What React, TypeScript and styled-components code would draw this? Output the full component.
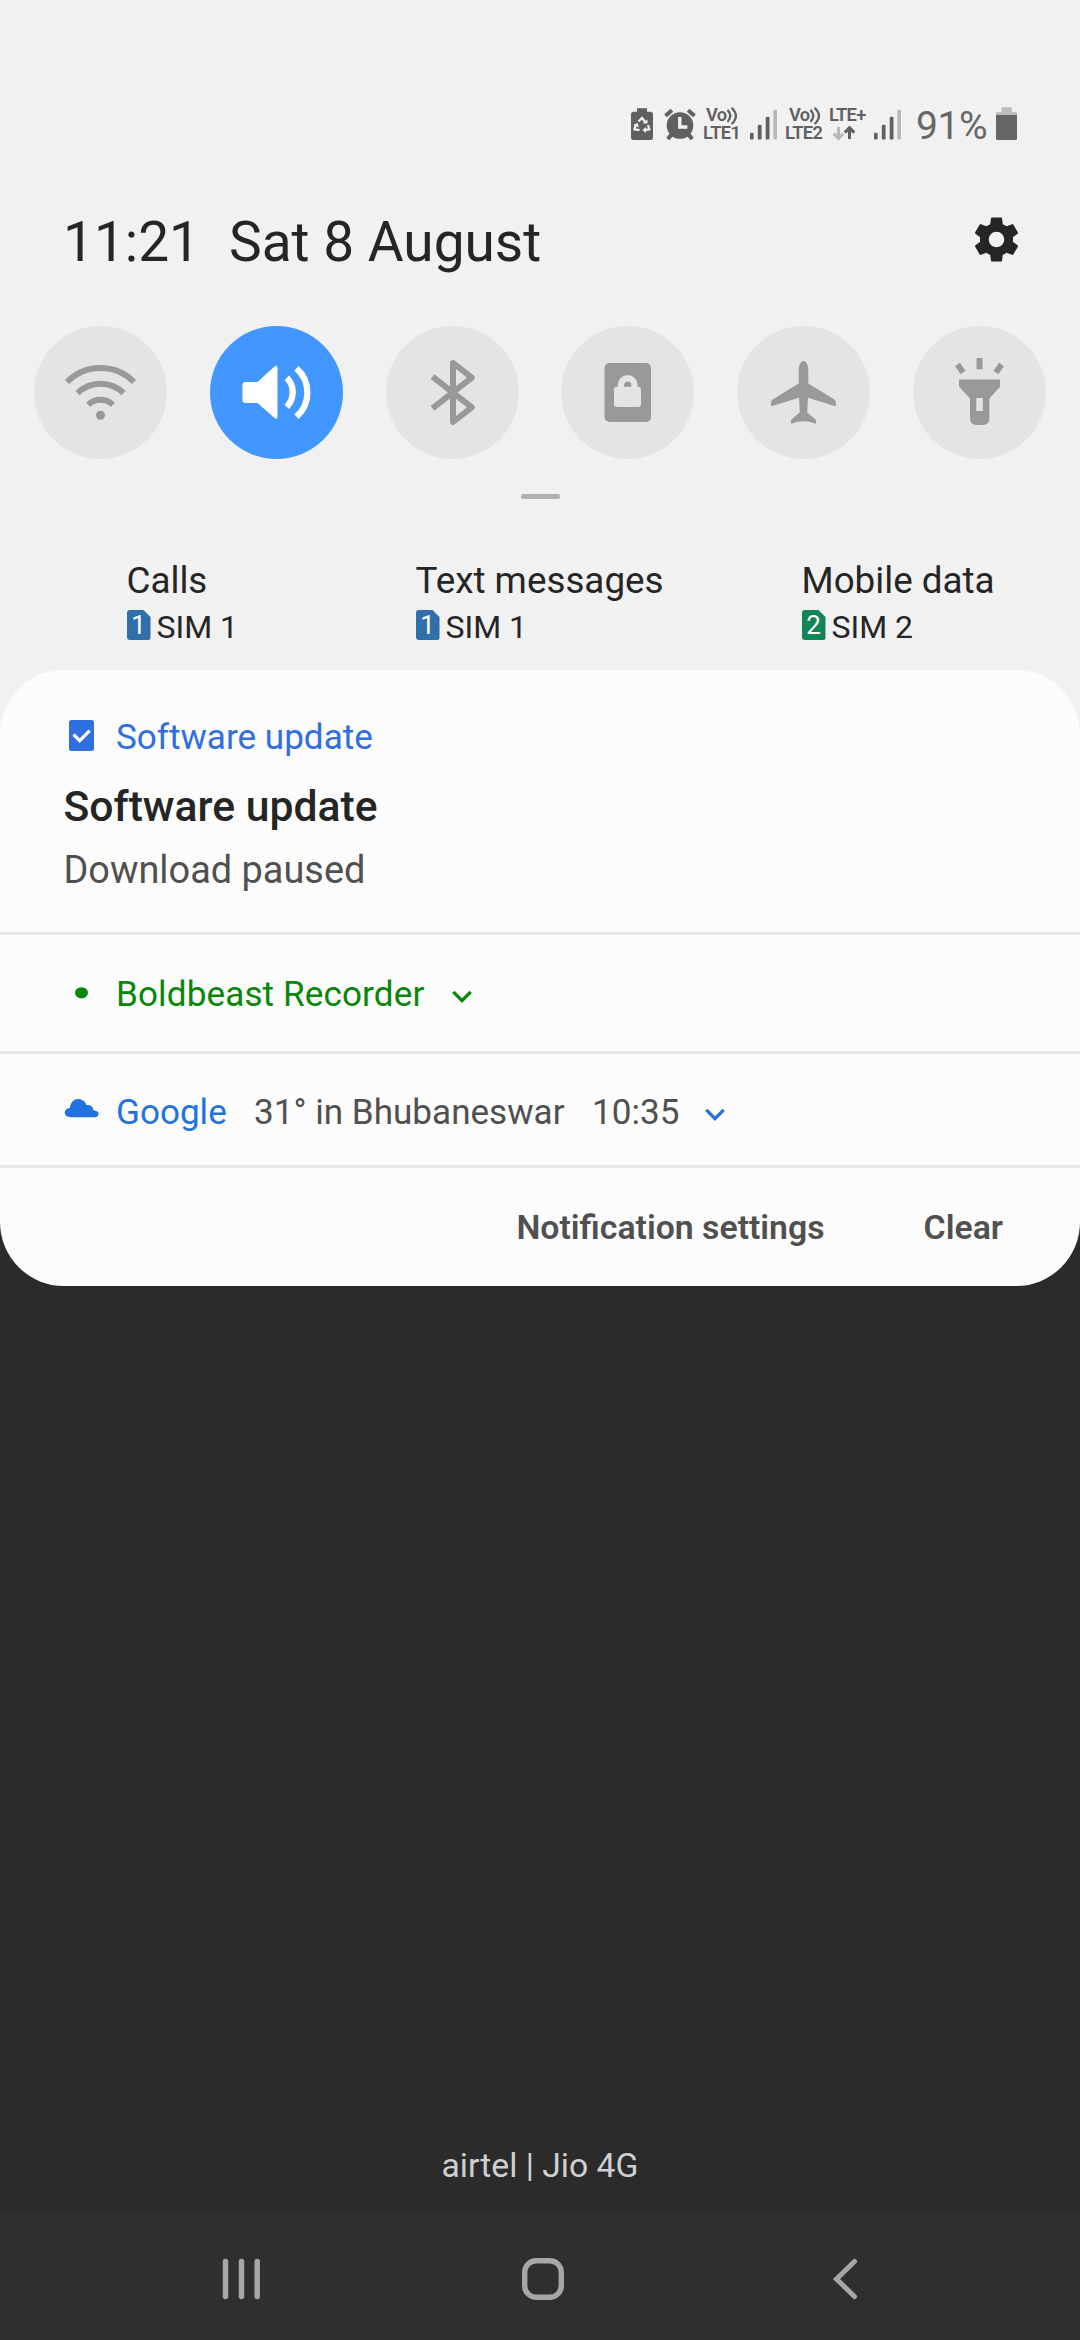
import React from "react";
import styled, { createGlobalStyle } from "styled-components";

const GlobalStyle = createGlobalStyle`
  *, *::before, *::after { box-sizing: border-box; }
  body { margin: 0; background: #2b2b2b; font-family: Roboto, "Noto Sans", sans-serif; }
  svg { display: block; flex: none; }
`;

const Screen = styled.main`
  display: flex;
  flex-direction: column;
  width: 1080px;
  height: 2340px;
  overflow: hidden;
  background: #2b2b2b;
`;

const Shade = styled.div`
  background: linear-gradient(#f1f1f1 0 900px, #2b2b2b 900px);
  height: 1286px;
  display: flex;
  flex-direction: column;
`;

/* ---------- status bar ---------- */

const StatusBar = styled.header`
  display: flex;
  height: 184px;
  padding: 106px 63px 0 0;
  justify-content: flex-end;
  color: #606060;
`;

const StatusItem = styled.div<{ $width: number; $gap?: number }>`
  flex: none;
  width: ${(p) => p.$width}px;
  margin-left: ${(p) => p.$gap ?? 0}px;
`;

const TinyLine = styled.div<{ $indent?: number; $tracking?: number }>`
  display: flex;
  height: 18px;
  padding-left: ${(p) => p.$indent ?? 0}px;
  font-size: 18.3px;
  font-weight: 600;
  line-height: 18px;
  letter-spacing: ${(p) => p.$tracking ?? -0.6}px;
  white-space: nowrap;
`;

const Percent = styled.div`
  font-size: 39px;
  line-height: 40px;
  letter-spacing: -0.4px;
  color: #666;
  white-space: nowrap;
`;

/* ---------- clock ---------- */

const ClockRow = styled.div`
  display: flex;
  align-items: center;
  height: 116px;
  padding: 0 57px 0 63px;
  font-size: 55px;
  line-height: 64px;
  color: #252525;
  white-space: nowrap;
`;

const Time = styled.time`
  width: 166px;
`;

const DateText = styled.span`
  flex: 1;
`;

const SettingsButton = styled.button`
  margin: 0 0 5px;
  padding: 0;
  border: 0;
  background: none;
`;

/* ---------- quick toggles ---------- */

const Toggles = styled.div`
  display: flex;
  justify-content: space-between;
  padding: 26px 34px 0;
`;

const Toggle = styled.button<{ $on?: boolean }>`
  width: 133px;
  height: 133px;
  padding: 0;
  border: 0;
  border-radius: 50%;
  background: ${(p) => (p.$on ? "#4296ff" : "#e4e4e4")};
  color: ${(p) => (p.$on ? "#fff" : "#999")};
`;

const Handle = styled.div`
  width: 39px;
  height: 5px;
  margin: 35px auto 0;
  border-radius: 3px;
  background: #b1b1b1;
`;

/* ---------- SIM selection ---------- */

const SimRow = styled.section`
  display: grid;
  grid-template-columns: 289px 386px 1fr;
  height: 171px;
  padding: 60px 0 0 126.5px;
  color: #252525;
`;

const SimTitle = styled.div`
  font-size: 36.8px;
  line-height: 44px;
  white-space: nowrap;
`;

const SimValue = styled.div`
  display: flex;
  align-items: center;
  gap: 6px;
  height: 40px;
  margin-top: 4px;
  font-size: 32px;
  line-height: 40px;
  white-space: nowrap;
`;

const SimBadge = styled.span<{ $color: string }>`
  width: 24px;
  height: 30px;
  margin-bottom: 4px;
  border-radius: 3px;
  background: ${(p) => p.$color};
  clip-path: polygon(0 0, 17px 0, 100% 7px, 100% 100%, 0 100%);
  color: #fff;
  font-size: 26px;
  line-height: 31px;
  text-align: center;
`;

/* ---------- notifications ---------- */

const Panel = styled.section`
  display: flex;
  flex-direction: column;
  height: 616px;
  border-radius: 64px;
  background: #fcfcfc;
`;

const Card = styled.article`
  height: 265px;
  padding: 45px 63px 0;
  border-bottom: 3px solid #e8e8e8;
`;

const AppLine = styled.div<{ $color: string }>`
  display: flex;
  align-items: center;
  height: 44px;
  color: ${(p) => p.$color};
  font-size: 35.1px;
  line-height: 44px;
  white-space: nowrap;
`;

const IconSlot = styled.span`
  flex: none;
  width: 53px;
`;

const AppName = styled.span<{ $width?: number; $tracking?: number }>`
  flex: none;
  width: ${(p) => (p.$width ? `${p.$width}px` : "auto")};
  letter-spacing: ${(p) => p.$tracking ?? 0}px;
`;

const Detail = styled.span<{ $width: number }>`
  flex: none;
  width: ${(p) => p.$width}px;
  color: #505050;
`;

const CardTitle = styled.h2`
  margin: 22px 0 0 0.5px;
  font-size: 42.7px;
  font-weight: 500;
  line-height: 50px;
  color: #252525;
`;

const CardBody = styled.p`
  margin: 17px 0 0 0.5px;
  font-size: 37.9px;
  line-height: 44px;
  color: #505050;
`;

const CompactRow = styled.article<{ $height: number; $top: number }>`
  height: ${(p) => p.$height}px;
  padding: ${(p) => p.$top}px 63px 0;
  border-bottom: 3px solid #e8e8e8;
`;

const Actions = styled.footer`
  display: flex;
  flex: 1;
  justify-content: flex-end;
  gap: 99px;
  padding: 38px 77px 0 0;
`;

const TextButton = styled.button`
  height: 44px;
  padding: 0;
  border: 0;
  background: none;
  color: #505050;
  font: 600 33.8px/44px Roboto, "Noto Sans", sans-serif;
  white-space: nowrap;
`;

/* ---------- bottom ---------- */

const Carrier = styled.div`
  display: flex;
  flex: 1;
  align-items: flex-end;
  justify-content: center;
  padding-bottom: 26px;
  color: #d0d0d0;
  font-size: 33.7px;
  line-height: 44px;
`;

const NavBar = styled.nav`
  display: grid;
  grid-template-columns: 42px 42px 42px;
  justify-content: center;
  align-items: center;
  column-gap: 260px;
  height: 126px;
  padding: 4px 0 0 6px;
  background: #2f2f2f;
  color: #a6a6a6;
`;

/* ---------- icons ---------- */

const BatterySaverIcon = () => (
  <svg width="22" height="34" viewBox="0 0 22 34">
    <path fill="currentColor" d="M6 2.3h10v3.5h3.5A2.5 2.5 0 0 1 22 8.300v23.200a2.500 2.500 0 0 1-2.500 2.500h-17A2.500 2.500 0 0 1 0 31.500V8.300A2.500 2.500 0 0 1 2.500 5.800H6z" />
    <g fill="none" stroke="#f1f1f1" strokeWidth="2.300">
      <path d="M7.600 15.500 10.900 12l3.400 4" />
      <path d="M17 19l1.300 4.300-5 .8" />
      <path d="M4.800 18.500l-1.300 4.800 5 .8" />
    </g>
    <path fill="#f1f1f1" d="M11.500 17.500h5v-4zM15 21v6l-3.500-3zM2.500 19l4-2 1.500 4.500z" />
  </svg>
);

const AlarmIcon = () => (
  <svg width="32" height="34" viewBox="0 0 32 34">
    <circle cx="16" cy="19.500" r="13.300" fill="currentColor" />
    <path
      d="M1.500 9.800 8 4.200M30.500 9.800 24 4.200M7.500 28.500 3.800 33M24.500 28.500 28.200 33"
      stroke="currentColor"
      strokeWidth="4"
      fill="none"
    />
    <path d="M15.800 11v10h7.500" fill="none" stroke="#f1f1f1" strokeWidth="3.400" />
  </svg>
);

const VoiceWaves = () => (
  <svg width="12" height="19" viewBox="0 0 12 19">
    <g fill="none" stroke="currentColor" strokeWidth="2.300">
      <path d="M.4 3.900Q6.200 9.800.4 15.900" />
      <path d="M4.600 1.900Q13.200 9.800 4.600 18" />
    </g>
  </svg>
);

const SignalIcon = () => (
  <svg width="27" height="34" viewBox="0 0 27 34">
    <g fill="currentColor">
      <rect x="0" y="26.700" width="3.600" height="6.800" rx="1.200" />
      <rect x="7.800" y="18.700" width="3.800" height="14.800" rx="1.200" />
      <rect x="15.700" y="10.700" width="3.800" height="22.800" rx="1.200" />
      <rect x="23.400" y="3.700" width="3.600" height="29.800" rx="1.200" fill="#b8b8b8" />
    </g>
  </svg>
);

const DataArrows = () => (
  <svg width="23" height="17" viewBox="0 0 23 17">
    <path d="M5.500 3v11M.8 9.600l4.700 5 4.700-5" fill="none" stroke="#b8b8b8" strokeWidth="3" />
    <path d="M16.500 15V4M11.800 8.600l4.700-5 4.700 5" fill="none" stroke="currentColor" strokeWidth="3" />
  </svg>
);

const BatteryIcon = () => (
  <svg width="21" height="34" viewBox="0 0 21 34">
    <path fill="#bdbdbd" d="M5.500 1.300h10.300V6H19.500A1.500 1.500 0 0 1 21 7.500V10H0V7.500A1.500 1.500 0 0 1 1.500 6h4z" />
    <path fill="#666" d="M0 9h21v23.500a1.500 1.500 0 0 1-1.500 1.500h-18A1.500 1.500 0 0 1 0 32.500z" />
  </svg>
);

const GearIcon = () => (
  <svg width="53" height="53" viewBox="0 0 24 24" fill="#252525">
    <path d="M19.430 12.980c.040-.320.070-.640.070-.980s-.030-.660-.070-.980l2.110-1.650c.190-.150.240-.420.120-.640l-2-3.460c-.120-.220-.390-.300-.610-.220l-2.490 1c-.520-.400-1.080-.730-1.690-.980l-.380-2.650C14.460 2.180 14.250 2 14 2h-4c-.250 0-.460.180-.490.420l-.380 2.650c-.610.250-1.170.590-1.690.980l-2.490-1c-.230-.090-.490 0-.610.220l-2 3.460c-.130.220-.070.490.120.640l2.110 1.650c-.040.320-.070.650-.070.980s.030.660.070.980l-2.110 1.650c-.190.150-.240.420-.120.640l2 3.460c.120.220.390.300.610.220l2.490-1c.520.400 1.080.730 1.690.980l.380 2.650c.030.240.240.420.490.420h4c.250 0 .460-.180.490-.420l.380-2.650c.610-.250 1.170-.590 1.690-.980l2.490 1c.230.090.490 0 .610-.220l2-3.460c.120-.220.070-.490-.120-.640l-2.110-1.650zM12 15.500c-1.930 0-3.500-1.570-3.500-3.500s1.570-3.500 3.500-3.500 3.500 1.570 3.500 3.500-1.570 3.500-3.500 3.500z" />
  </svg>
);

const ToggleSvg = ({ children }: { children: React.ReactNode }) => (
  <svg width="133" height="133" viewBox="0 0 133 133">{children}</svg>
);

const WifiIcon = () => (
  <ToggleSvg>
    <g fill="none" stroke="currentColor" strokeWidth="6">
      <path d="M33 56a47 47 0 0 1 67 0" />
      <path d="M43.500 67.200a32.800 32.800 0 0 1 46 0" />
      <path d="M54.200 78.800a17.600 17.600 0 0 1 24.600 0" />
    </g>
    <circle cx="66.500" cy="89.300" r="4.500" fill="currentColor" />
  </ToggleSvg>
);

const SoundIcon = () => (
  <ToggleSvg>
    <path fill="currentColor" d="M35.400 56H47.500L64.500 40.600Q67.500 38.600 67.500 42V90.700Q67.500 94 64.500 92L47.500 77H35.400a3 3 0 0 1-3-3V59a3 3 0 0 1 3-3z" />
    <g fill="none" stroke="currentColor" strokeWidth="6.300">
      <path d="M76.800 51.800a20.900 20.900 0 0 1 0 29.100" />
      <path d="M86.500 42.300a32.300 32.300 0 0 1 0 48.400" />
    </g>
  </ToggleSvg>
);

const BluetoothIcon = () => (
  <ToggleSvg>
    <path
      fill="none"
      stroke="currentColor"
      strokeWidth="6"
      strokeLinejoin="round"
      d="M46.500 50.700 85.800 81.400 67 96V37L85.800 51.600 46.500 82.300"
    />
  </ToggleSvg>
);

const LockIcon = () => (
  <ToggleSvg>
    <rect x="43.500" y="37" width="46.500" height="59" rx="5" fill="currentColor" />
    <rect x="53" y="60.700" width="27" height="20.300" rx="3" fill="#e4e4e4" />
    <path d="M59.900 62v-3a6.750 6.750 0 0 1 13.500 0v3" fill="none" stroke="#e4e4e4" strokeWidth="6.300" />
  </ToggleSvg>
);

const PlaneIcon = () => (
  <ToggleSvg>
    <path
      fill="currentColor"
      d="M66.500 35C69.500 35 71.300 40 71.300 44.500V57.500L97 73.200Q99 74.600 99 77V79.800L97.500 80 72 72H71L70.200 86.500 77.500 92.500Q79.400 94 79.200 96.500L78.500 97.700Q66.500 93 54.500 97.700L53.800 96.500Q53.600 94 55.500 92.500L62.800 86.500 62 72H61L35.500 80 34 79.800V77Q34 74.600 36 73.200L61.700 57.500V44.500C61.700 40 63.500 35 66.500 35z"
    />
  </ToggleSvg>
);

const TorchIcon = () => (
  <ToggleSvg>
    <path fill="currentColor" d="M46 53.500H87V60.700L76.400 72.500V93a6 6 0 0 1-6 6H63a6 6 0 0 1-6-6V72.500L46 60.700z" />
    <rect x="63.300" y="72" width="6.500" height="13" fill="#e4e4e4" />
    <path d="M66.500 32v11.300M44.500 38.500l5.600 7.900M88.500 38.500l-5.600 7.900" stroke="currentColor" strokeWidth="6" />
  </ToggleSvg>
);

const UpdateIcon = () => (
  <svg width="37" height="44" viewBox="0 0 37 44">
    <rect x="6" y="5" width="25" height="31" rx="2.500" fill="currentColor" />
    <path d="M10.500 19.500l6.200 6.200 10-10" fill="none" stroke="#fff" strokeWidth="3.200" />
  </svg>
);

const DotIcon = () => (
  <svg width="37" height="44" viewBox="0 0 37 44">
    <ellipse cx="18.500" cy="20.800" rx="6.500" ry="5.600" fill="currentColor" />
  </svg>
);

const CloudIcon = () => (
  <svg width="37" height="44" viewBox="0 0 37 44">
    <path fill="currentColor" d="M8 27.200C4 27.200 1.700 25.200 1.700 22.500c0-2.700 2-4.300 5-4.600C7.800 12 11 9 15.200 9c4 0 7 2.400 8.200 6 3.800-.6 6.800 1.700 7.100 5.300 3.200.2 5.100 1.700 5.100 3.700 0 2-1.600 3.200-4 3.200z" />
  </svg>
);

const Chevron = () => (
  <svg width="20" height="44" viewBox="0 0 20 44">
    <path d="M1.300 19.900l8.700 8.700 8.700-8.700" fill="none" stroke="currentColor" strokeWidth="3.400" />
  </svg>
);

const RecentsIcon = () => (
  <svg width="42" height="44" viewBox="0 0 42 44">
    <path d="M5.500 4.500v35M21.500 4.500v35M37.200 4.500v35" stroke="currentColor" strokeWidth="5.500" strokeLinecap="round" />
  </svg>
);

const HomeIcon = () => (
  <svg width="42" height="44" viewBox="0 0 42 44">
    <rect x="2.700" y="3.700" width="36.600" height="36.600" rx="11.500" fill="none" stroke="currentColor" strokeWidth="5.400" />
  </svg>
);

const BackIcon = () => (
  <svg width="42" height="44" viewBox="0 0 42 44">
    <path d="M30.500 4.500 12.500 22l18 17.500" fill="none" stroke="currentColor" strokeWidth="5" strokeLinecap="round" />
  </svg>
);

const toggles = [
  { name: "Wi-Fi", Icon: WifiIcon },
  { name: "Sound", Icon: SoundIcon, on: true },
  { name: "Bluetooth", Icon: BluetoothIcon },
  { name: "Rotation lock", Icon: LockIcon },
  { name: "Flight mode", Icon: PlaneIcon },
  { name: "Torch", Icon: TorchIcon },
];

const sims = [
  { title: "Calls", slot: 1, color: "#316fab" },
  { title: "Text messages", slot: 1, color: "#316fab" },
  { title: "Mobile data", slot: 2, color: "#138657" },
];

export default function App() {
  return (
    <Screen>
      <GlobalStyle />
      <Shade>
        <StatusBar>
          <StatusItem $width={22}><BatterySaverIcon /></StatusItem>
          <StatusItem $width={32} $gap={11}><AlarmIcon /></StatusItem>
          <StatusItem $width={38} $gap={7}>
            <TinyLine $indent={3}>Vo<VoiceWaves /></TinyLine>
            <TinyLine>LTE1</TinyLine>
          </StatusItem>
          <StatusItem $width={27} $gap={9}><SignalIcon /></StatusItem>
          <StatusItem $width={40} $gap={8}>
            <TinyLine $indent={4}>Vo<VoiceWaves /></TinyLine>
            <TinyLine>LTE2</TinyLine>
          </StatusItem>
          <StatusItem $width={37} $gap={4}>
            <TinyLine $tracking={-0.7}>LTE+</TinyLine>
            <TinyLine $indent={4}><DataArrows /></TinyLine>
          </StatusItem>
          <StatusItem $width={27} $gap={8}><SignalIcon /></StatusItem>
          <StatusItem $width={71} $gap={15}><Percent>91%</Percent></StatusItem>
          <StatusItem $width={21} $gap={9}><BatteryIcon /></StatusItem>
        </StatusBar>

        <ClockRow>
          <Time>11:21</Time>
          <DateText>Sat 8 August</DateText>
          <SettingsButton><GearIcon /></SettingsButton>
        </ClockRow>

        <Toggles>
          {toggles.map(({ name, Icon, on }) => (
            <Toggle key={name} $on={on}><Icon /></Toggle>
          ))}
        </Toggles>
        <Handle />

        <SimRow>
          {sims.map((s) => (
            <div key={s.title}>
              <SimTitle>{s.title}</SimTitle>
              <SimValue>
                <SimBadge $color={s.color}>{s.slot}</SimBadge>
                SIM {s.slot}
              </SimValue>
            </div>
          ))}
        </SimRow>

        <Panel>
          <Card>
            <AppLine $color="#2f6fe0">
              <IconSlot><UpdateIcon /></IconSlot>
              <AppName>Software update</AppName>
            </AppLine>
            <CardTitle>Software update</CardTitle>
            <CardBody>Download paused</CardBody>
          </Card>
          <CompactRow $height={119} $top={37}>
            <AppLine $color="#0a870a">
              <IconSlot><DotIcon /></IconSlot>
              <AppName $width={336} $tracking={0.12}>Boldbeast Recorder</AppName>
              <Chevron />
            </AppLine>
          </CompactRow>
          <CompactRow $height={114} $top={36}>
            <AppLine $color="#2272e0">
              <IconSlot><CloudIcon /></IconSlot>
              <AppName $width={138}>Google</AppName>
              <Detail $width={338}>31° in Bhubaneswar</Detail>
              <Detail $width={113}>10:35</Detail>
              <Chevron />
            </AppLine>
          </CompactRow>
          <Actions>
            <TextButton>Notification settings</TextButton>
            <TextButton>Clear</TextButton>
          </Actions>
        </Panel>
      </Shade>

      <Carrier>airtel | Jio 4G</Carrier>
      <NavBar>
        <RecentsIcon />
        <HomeIcon />
        <BackIcon />
      </NavBar>
    </Screen>
  );
}
